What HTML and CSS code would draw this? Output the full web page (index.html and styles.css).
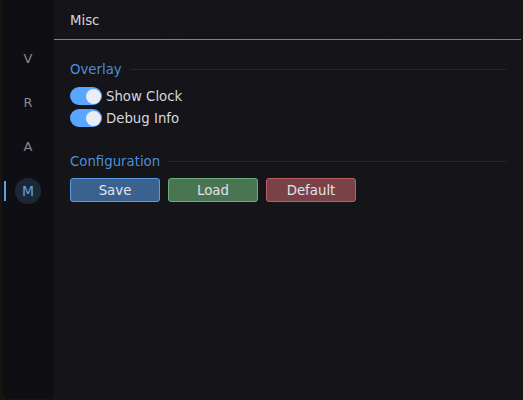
FILE: index.html
```html
<!DOCTYPE html>
<html>
<head>
<meta charset="utf-8">
<link rel="stylesheet" href="styles.css">
</head>
<body>
<div class="window">
  <nav class="sidebar">
    <div class="tab">V</div>
    <div class="tab">R</div>
    <div class="tab">A</div>
    <div class="tab active">M</div>
  </nav>
  <main class="main">
    <header class="header">Misc</header>
    <div class="content">
      <section class="section">
        <div class="section-title"><span>Overlay</span><i class="rule"></i></div>
        <label class="toggle-row"><span class="toggle"><span class="knob"></span></span>Show Clock</label>
        <label class="toggle-row"><span class="toggle"><span class="knob"></span></span>Debug Info</label>
      </section>
      <section class="section">
        <div class="section-title"><span>Configuration</span><i class="rule"></i></div>
        <div class="buttons">
          <button class="btn save">Save</button>
          <button class="btn load">Load</button>
          <button class="btn default">Default</button>
        </div>
      </section>
    </div>
  </main>
</div>
</body>
</html>
```
FILE: styles.css
```css
* { box-sizing: border-box; }
html, body {
  margin: 0;
  height: 100%;
  background: #17150e;
  font-family: "DejaVu Sans", sans-serif;
  font-size: 13.3px;
}
.window {
  margin-left: 2px;
  width: 519px;
  height: 399px;
  display: flex;
  border-radius: 0 0 7px 7px;
  overflow: hidden;
  background: #141419;
}
.sidebar {
  width: 52px;
  background: #0f0f13;
  display: flex;
  flex-direction: column;
  align-items: center;
  gap: 18px;
  padding-top: 45px;
}
.tab {
  width: 26px;
  height: 26px;
  border-radius: 50%;
  display: flex;
  align-items: center;
  justify-content: center;
  color: #86868f;
  font-size: 13px;
  position: relative;
}
.tab.active {
  margin-top: 1px;
  background: #1c2838;
  color: #5aa2e6;
  font-size: 14px;
}
.tab.active::before {
  content: "";
  position: absolute;
  left: -11px;
  top: 3px;
  width: 2px;
  height: 20px;
  background: #5aa2e6;
}
.main {
  flex: 1;
  display: flex;
  flex-direction: column;
}
.header {
  height: 40px;
  padding: 1px 0 0 16px;
  display: flex;
  align-items: center;
  color: #d6d6de;
  border-bottom: 1px solid transparent;
  border-image: linear-gradient(90deg, #4a8de0, #9a5ed2) 1;
}
.content {
  padding: 21px 15px 0 16px;
  display: flex;
  flex-direction: column;
  gap: 26px;
}
.section {
  display: flex;
  flex-direction: column;
  gap: 4px;
}
.section-title {
  display: flex;
  align-items: center;
  gap: 8px;
  color: #4b8fd6;
  height: 16px;
  margin-bottom: 6px;
}
.rule {
  flex: 1;
  height: 1px;
  background: #272731;
}
.toggle-row {
  display: flex;
  align-items: center;
  gap: 4px;
  color: #d6d6de;
  height: 18px;
}
.toggle {
  width: 32px;
  height: 18px;
  border-radius: 9px;
  background: #58a6ff;
  position: relative;
}
.knob {
  position: absolute;
  right: 1px;
  top: 1.5px;
  width: 15px;
  height: 15px;
  border-radius: 50%;
  background: #ececf4;
}
.buttons {
  display: flex;
  gap: 8px;
  margin-top: -1px;
}
.btn {
  width: 90px;
  height: 24px;
  border-radius: 3px;
  font-family: "DejaVu Sans", sans-serif;
  font-size: 13.3px;
  color: #e2e2ea;
  padding: 0;
  border: 1px solid;
}
.save { background: #3b628f; border-color: #5b9be2; }
.load { background: #4a7553; border-color: #6cb079; }
.default { background: #7a4246; border-color: #bd5f64; }
```
